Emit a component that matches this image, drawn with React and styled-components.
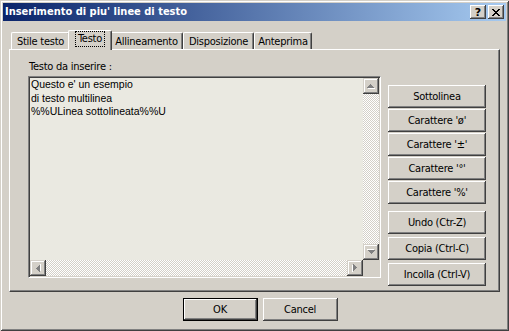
import React from 'react';
import styled, { createGlobalStyle, css } from 'styled-components';

const face = '#D4D0C8';
const shade = '#808080';
const dark = '#404040';

const GlobalStyle = createGlobalStyle`
  body {
    margin: 0;
    font-family: "DejaVu Sans Condensed", "Liberation Sans", sans-serif;
    font-size: 11px;
    letter-spacing: -0.25px;
    color: #000;
  }
`;

const raised = css`
  box-shadow: inset -1px -1px ${dark}, inset 1px 1px #fff, inset -2px -2px ${shade}, inset 2px 2px ${face};
`;

const Window = styled.div`
  width: 509px;
  height: 331px;
  box-sizing: border-box;
  padding: 3px;
  background: ${face};
  box-shadow: inset 1px 1px ${face}, inset -1px -1px ${dark}, inset 2px 2px #fff, inset -2px -2px ${shade};
  display: flex;
  flex-direction: column;
`;

const TitleBar = styled.div`
  height: 18px;
  display: flex;
  align-items: center;
  padding: 0 2px;
  background: linear-gradient(to right, #0A246A, #A6CAF0);
  color: #fff;
  font-weight: bold;
  letter-spacing: 0;
`;

const Title = styled.span`
  flex: 1;
  line-height: 18px;
`;

const CaptionButton = styled.button`
  width: 16px;
  height: 14px;
  margin-left: 2px;
  padding: 0;
  border: 0;
  background: ${face};
  ${raised};
  display: flex;
  align-items: center;
  justify-content: center;
  font: bold 11px "DejaVu Sans", sans-serif;
  color: #000;
`;

const Body = styled.div`
  padding: 9px 6px 0;
  display: flex;
  flex-direction: column;
`;

const TabStrip = styled.div`
  display: flex;
  align-items: flex-end;
  height: 20px;
  padding-left: 2px;
  margin-bottom: -1px;
  position: relative;
  z-index: 1;
`;

const Tab = styled.div`
  box-sizing: border-box;
  width: ${p => p.w + (p.active ? 4 : 0)}px;
  height: ${p => (p.active ? 20 : 17)}px;
  margin: 0 ${p => (p.active ? -2 : 0)}px ${p => (p.active ? 0 : 1)}px;
  position: relative;
  z-index: ${p => (p.active ? 2 : 1)};
  background: ${face};
  border-top: 1px solid #fff;
  border-left: 1px solid #fff;
  border-right: 1px solid ${dark};
  border-radius: 2px 2px 0 0;
  box-shadow: inset -1px 0 ${shade};
  display: flex;
  justify-content: center;
  align-items: ${p => (p.active ? 'flex-start' : 'center')};
  padding-top: ${p => (p.active ? 1 : 0)}px;
  white-space: nowrap;
`;

const FocusRing = styled.span`
  padding: 0 2px;
  line-height: 14px;
  outline: 1px dotted #000;
  outline-offset: 0;
`;

const Panel = styled.div`
  height: 243px;
  box-sizing: border-box;
  border-top: 1px solid #fff;
  border-left: 1px solid #fff;
  border-right: 1px solid ${dark};
  border-bottom: 1px solid ${dark};
  box-shadow: inset -1px -1px ${shade};
  display: flex;
  align-items: flex-start;
  gap: 7px;
  padding: 10px 0 0 18px;
`;

const Column = styled.div`
  display: flex;
  flex-direction: column;
`;

const Label = styled.div`
  line-height: 13px;
  padding-left: 1px;
  margin-bottom: 3px;
`;

const TextBox = styled.div`
  width: 353px;
  height: 202px;
  box-sizing: border-box;
  border: 1px solid;
  border-color: ${shade} #fff #fff ${shade};
  box-shadow: inset 1px 1px ${dark}, inset -1px -1px ${face};
  padding: 1px;
  display: grid;
  grid-template-columns: 1fr 16px;
  grid-template-rows: 1fr 16px;
`;

const TextArea = styled.div`
  background: #EAE9E1;
  padding: 0 1px;
  font-family: "Liberation Sans", Arial, sans-serif;
  font-size: 10.5px;
  letter-spacing: 0;
  line-height: 13.5px;
  white-space: pre;
  overflow: hidden;
`;

const checker = css`
  background-color: #fff;
  background-image: repeating-conic-gradient(${face} 0% 25%, #fff 0% 50%);
  background-size: 2px 2px;
`;

const ScrollBar = styled.div`
  display: flex;
  flex-direction: ${p => (p.horizontal ? 'row' : 'column')};
`;

const Track = styled.div`
  flex: 1;
  ${checker};
`;

const ScrollButton = styled.div`
  width: 16px;
  height: 16px;
  flex: none;
  background: ${face};
  box-shadow: inset -1px -1px ${dark}, inset 1px 1px ${face}, inset -2px -2px ${shade}, inset 2px 2px #fff;
  display: flex;
  align-items: center;
  justify-content: center;
`;

const Corner = styled.div`
  background: ${face};
`;

const ButtonStack = styled.div`
  display: flex;
  flex-direction: column;
  gap: ${p => p.gap}px;
  margin-top: ${p => p.top}px;
`;

const PushButton = styled.button`
  width: ${p => p.w || 98}px;
  height: 23px;
  padding: 0;
  border: 0;
  background: ${face};
  font: inherit;
  letter-spacing: inherit;
  color: #000;
  ${p =>
    p.primary
      ? css`box-shadow: inset 0 0 0 1px #000, inset -2px -2px ${dark}, inset 2px 2px #fff, inset -3px -3px ${shade};`
      : raised};
`;

const Footer = styled.div`
  display: flex;
  justify-content: center;
  gap: 5px;
  padding-left: 11px;
  margin-top: 6px;
`;

const rot = { up: 0, right: 90, down: 180, left: 270 };

const Arrow = ({ dir }) => (
  <svg width="16" height="16" viewBox="0 0 16 16" shapeRendering="crispEdges"
    style={{ transform: `rotate(${rot[dir]}deg)` }}>
    <path d="M8 7h1v1h1v1h1v1h1v1H5v-1h1V9h1V8h1z" fill="#fff" />
    <path d="M7 6h1v1h1v1h1v1h1v1H4V9h1V8h1V7h1z" fill={shade} />
  </svg>
);

const tabs = [
  ['Stile testo', 59],
  ['Testo', 40],
  ['Allineamento', 73],
  ['Disposizione', 71],
  ['Anteprima', 58],
];

const App = () => (
  <>
    <GlobalStyle />
    <Window>
      <TitleBar>
        <Title>Inserimento di piu' linee di testo</Title>
        <CaptionButton>?</CaptionButton>
        <CaptionButton>
          <svg width="8" height="7" viewBox="0 0 8 7" shapeRendering="crispEdges">
            <path d="M0 0h2v1h1v1h2V1h1V0h2v1H7v1H6v1H5v1h1v1h1v1h1v1H6V6H5V5H3v1H2v1H0V6h1V5h1V4h1V3H2V2H1V1H0z" fill="#000" />
          </svg>
        </CaptionButton>
      </TitleBar>
      <Body>
        <TabStrip>
          {tabs.map(([t, w]) => (
            <Tab key={t} w={w} active={t === 'Testo'}>
              {t === 'Testo' ? <FocusRing>{t}</FocusRing> : t}
            </Tab>
          ))}
        </TabStrip>
        <Panel>
          <Column>
            <Label>Testo da inserire :</Label>
            <TextBox>
              <TextArea>{"Questo e' un esempio\ndi testo multilinea\n%%ULinea sottolineata%%U"}</TextArea>
              <ScrollBar>
                <ScrollButton><Arrow dir="up" /></ScrollButton>
                <Track />
                <ScrollButton><Arrow dir="down" /></ScrollButton>
              </ScrollBar>
              <ScrollBar horizontal>
                <ScrollButton><Arrow dir="left" /></ScrollButton>
                <Track />
                <ScrollButton><Arrow dir="right" /></ScrollButton>
              </ScrollBar>
              <Corner />
            </TextBox>
          </Column>
          <Column>
            <ButtonStack gap={1} top={25}>
              <PushButton>Sottolinea</PushButton>
              <PushButton>Carattere 'ø'</PushButton>
              <PushButton>Carattere '±'</PushButton>
              <PushButton>Carattere '°'</PushButton>
              <PushButton>Carattere '%'</PushButton>
            </ButtonStack>
            <ButtonStack gap={3} top={7}>
              <PushButton>Undo (Ctr-Z)</PushButton>
              <PushButton>Copia (Ctrl-C)</PushButton>
              <PushButton>Incolla (Ctrl-V)</PushButton>
            </ButtonStack>
          </Column>
        </Panel>
        <Footer>
          <PushButton primary w={75}>OK</PushButton>
          <PushButton w={75}>Cancel</PushButton>
        </Footer>
      </Body>
    </Window>
  </>
);

export default App;
